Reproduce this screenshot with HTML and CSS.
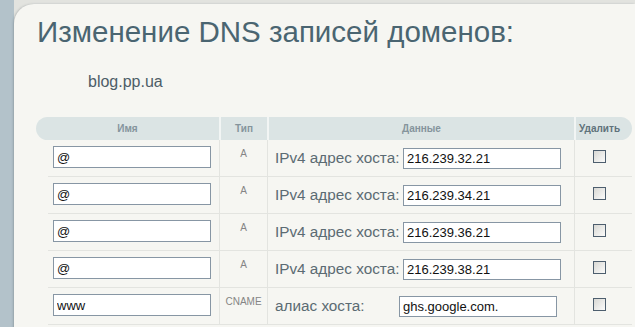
FILE: index.html
```html
<!DOCTYPE html>
<html lang="ru">
<head>
    <meta charset="UTF-8">
    <title>Изменение DNS записей доменов</title>
    <link rel="stylesheet" href="styles.css">
</head>
<body>
    <div class="sheet">
        <div class="panel">
            <h1 class="title">Изменение DNS записей доменов:</h1>
            <div class="domain">blog.pp.ua</div>

            <div class="records">
                <div class="thead">
                    <div class="th">Имя</div>
                    <div class="th">Тип</div>
                    <div class="th">Данные</div>
                    <div class="th th-del">Удалить</div>
                </div>

                <div class="row">
                    <div class="cell cell-name"><input class="field" type="text" value="@"></div>
                    <div class="cell cell-type">A</div>
                    <div class="cell cell-data"><span class="label">IPv4 адрес хоста:</span><input class="field" type="text" value="216.239.32.21"></div>
                    <div class="cell cell-del"><input class="check" type="checkbox"></div>
                </div>
                <div class="row">
                    <div class="cell cell-name"><input class="field" type="text" value="@"></div>
                    <div class="cell cell-type">A</div>
                    <div class="cell cell-data"><span class="label">IPv4 адрес хоста:</span><input class="field" type="text" value="216.239.34.21"></div>
                    <div class="cell cell-del"><input class="check" type="checkbox"></div>
                </div>
                <div class="row">
                    <div class="cell cell-name"><input class="field" type="text" value="@"></div>
                    <div class="cell cell-type">A</div>
                    <div class="cell cell-data"><span class="label">IPv4 адрес хоста:</span><input class="field" type="text" value="216.239.36.21"></div>
                    <div class="cell cell-del"><input class="check" type="checkbox"></div>
                </div>
                <div class="row">
                    <div class="cell cell-name"><input class="field" type="text" value="@"></div>
                    <div class="cell cell-type">A</div>
                    <div class="cell cell-data"><span class="label">IPv4 адрес хоста:</span><input class="field" type="text" value="216.239.38.21"></div>
                    <div class="cell cell-del"><input class="check" type="checkbox"></div>
                </div>
                <div class="row">
                    <div class="cell cell-name"><input class="field" type="text" value="www"></div>
                    <div class="cell cell-type">CNAME</div>
                    <div class="cell cell-data"><span class="label label-alias">алиас хоста:</span><input class="field" type="text" value="ghs.google.com."></div>
                    <div class="cell cell-del"><input class="check" type="checkbox"></div>
                </div>
            </div>
        </div>
    </div>
</body>
</html>
```

FILE: styles.css
```css
body {
    margin: 0;
    padding: 0;
    overflow: hidden;
    background-color: #b3c2ca;
    font-family: "Liberation Sans", Arial, sans-serif;
}

.sheet {
    margin-left: 14px;
    padding-top: 4px;
    height: 100vh;
    background-color: #e2e3df;
}

.panel {
    height: 100%;
    padding: 11px 0 0 22px;
    background-color: #f6f6f2;
    border-top-left-radius: 20px;
    box-shadow: -1px 0 2px rgba(60, 70, 80, 0.25);
}

.title {
    margin: 0 0 0 1px;
    font-size: 29.5px;
    font-weight: normal;
    color: #4a6571;
}

.domain {
    margin: 24px 0 0 52px;
    font-size: 16px;
    color: #4d5d67;
}

.records {
    margin-top: 26px;
    width: 596px;
}

.thead {
    display: grid;
    grid-template-columns: 183px 48px 307px 58px;
    height: 23px;
    background-color: #dbe4e4;
    border-radius: 12px;
}

.th {
    display: flex;
    align-items: center;
    justify-content: center;
    font-size: 10px;
    font-weight: bold;
    color: #85949c;
    white-space: nowrap;
}

.th + .th {
    border-left: 2px solid #f2f5f4;
}

.th-del {
    justify-content: flex-start;
    padding-left: 3px;
    color: #5f727b;
}

.row {
    display: grid;
    grid-template-columns: 171px 48px 307px 49px;
    height: 37px;
    margin-left: 12px;
    border-bottom: 1px solid #e3e4e0;
    box-sizing: border-box;
}

.cell + .cell {
    border-left: 1px solid #e3e4e0;
}

.cell-name {
    padding: 6px 0 0 5px;
}

.cell-type {
    padding-top: 8px;
    text-align: center;
    font-size: 10px;
    color: #858585;
}

.cell-data {
    display: flex;
    align-items: center;
    padding-left: 7px;
}

.cell-del {
    display: flex;
    justify-content: center;
    padding-top: 10px;
}

.label {
    flex-shrink: 0;
    width: 128px;
    font-size: 15.3px;
    color: #5b6b73;
    white-space: nowrap;
}

.label-alias {
    width: 124px;
}

.field {
    flex-shrink: 0;
    width: 158px;
    height: 22px;
    box-sizing: border-box;
    margin: 0;
    padding: 1px 3px 0;
    border: 1px solid #8796a4;
    background: #fff;
    font-family: "Liberation Sans", Arial, sans-serif;
    font-size: 13px;
    color: #111;
}

.cell-data .field {
    height: 21px;
}

.check {
    appearance: none;
    width: 13px;
    height: 13px;
    margin: 0;
    border: 1px solid #4d5e6e;
    background: linear-gradient(135deg, #d8d8d4, #fbfbfa);
}
```
